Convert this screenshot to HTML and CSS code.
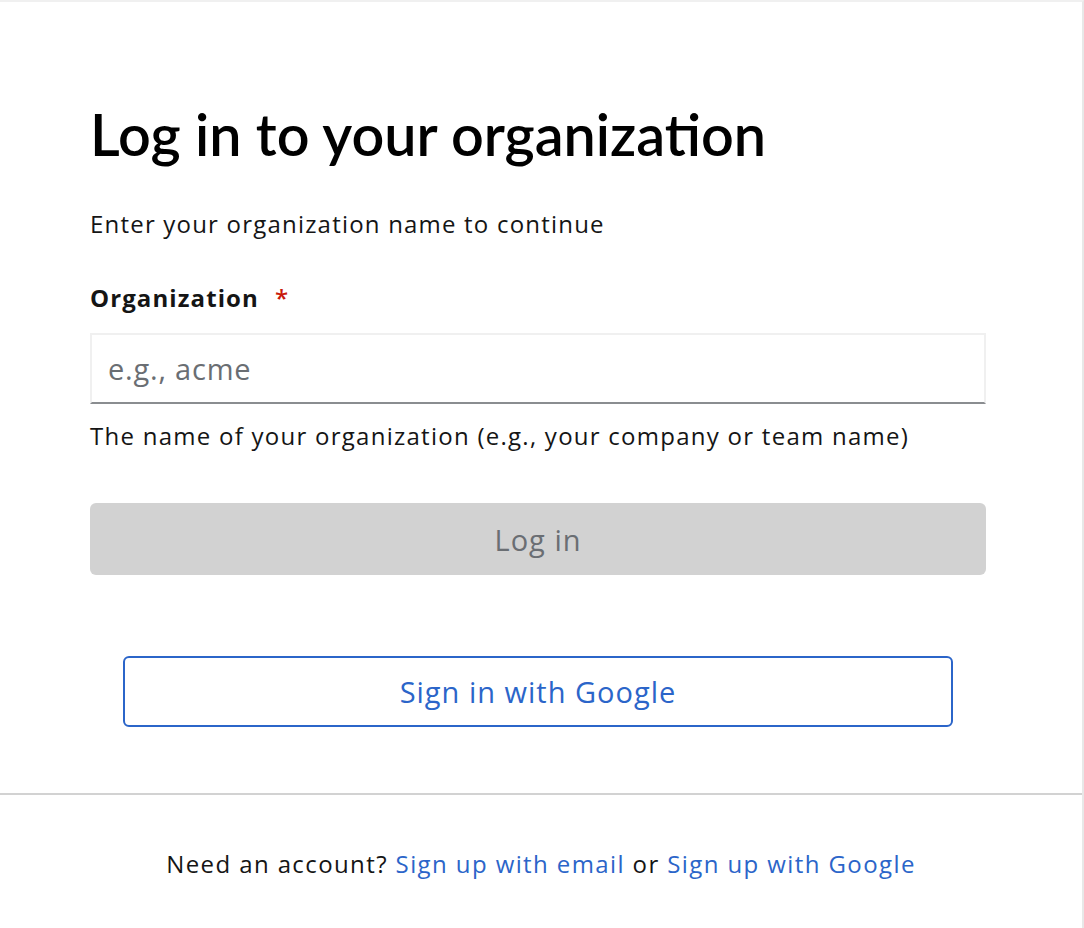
FILE: index.html
```html
<!DOCTYPE html>
<html lang="en">
<head>
  <meta charset="UTF-8">
  <meta name="viewport" content="width=device-width, initial-scale=1.0">
  <title>Log in to your organization</title>
  <link rel="stylesheet" href="styles.css">
</head>
<body>
  <div class="card">
    <div class="card-main">
      <h1 class="title">Log in to your organization</h1>
      <p class="subtitle">Enter your organization name to continue</p>

      <form class="login-form" onsubmit="return false">
        <label class="field-label" for="org">Organization<span class="required">*</span></label>
        <input class="text-input" type="text" id="org" placeholder="e.g., acme">
        <div class="helper">The name of your organization (e.g., your company or team name)</div>

        <button class="btn btn-primary" type="submit" disabled>Log in</button>
      </form>

      <div class="alt-login">
        <button class="btn btn-secondary" type="button">Sign in with Google</button>
      </div>
    </div>

    <div class="card-footer">
      Need an account? <a href="#">Sign up with email</a> or <a href="#">Sign up with Google</a>
    </div>
  </div>
</body>
</html>
```

FILE: styles.css
```css
body { margin: 0; background: #fff; font-family: "Open Sans", "Noto Sans", sans-serif; color: #151515; }
.card { width: 1082px; border-top: 2px solid #f0f0f0; border-right: 2px solid #e8e8e8; background: #fff; }
.card-main { padding: 99px 96px 66px 90px; }
.title { margin: 0; font-family: "Lato", sans-serif; font-size: 57.5px; font-weight: 600; line-height: 66px; color: #000; }
.subtitle { margin: 39px 0 0; font-size: 24px; letter-spacing: 1.2px; line-height: 36px; color: #151515; }
.login-form { margin-top: 38px; }
.field-label { display: block; font-size: 24px; font-weight: 700; letter-spacing: 1.1px; line-height: 36px; color: #151515; }
.required { color: #c9190b; margin-left: 16px; font-weight: 600; }
.text-input { display: block; box-sizing: border-box; width: 100%; height: 71px; margin-top: 17px; padding: 0 16px; font: inherit; font-size: 29px; letter-spacing: 0.8px; color: #151515; border: 2px solid #f0f0f0; border-bottom: 2px solid #8a8d90; background: #fff; outline: none; }
.text-input::placeholder { color: #6a6e73; }
.helper { font-size: 24px; letter-spacing: 1.26px; line-height: 36px; margin-top: 14px; color: #151515; }
.btn { display: block; box-sizing: border-box; width: 100%; font: inherit; font-size: 29px; letter-spacing: 1px; border-radius: 6px; cursor: pointer; }
.btn-primary { height: 72px; margin-top: 49px; border: none; background: #d2d2d2; color: #6a6e73; }
.alt-login { margin-top: 81px; padding: 0 33px; }
.btn-secondary { height: 71px; background: #fff; border: 2px solid #2b65c9; color: #2b65c9; }
.card-footer { border-top: 2px solid #d2d2d2; text-align: center; padding: 51px 0 52px; font-size: 24px; letter-spacing: 1.4px; line-height: 36px; color: #151515; }
.card-footer a { color: #2b65c9; text-decoration: none; }
```
